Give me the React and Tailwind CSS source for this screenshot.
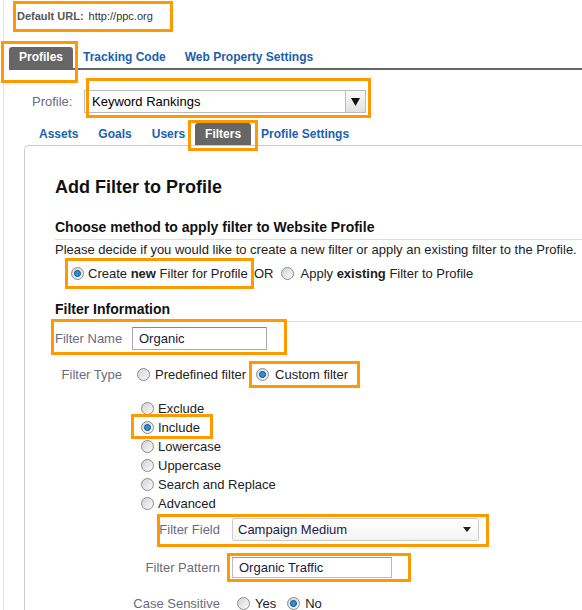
import React from 'react';

function Radio({ checked }) {
  return (
    <span className="flex h-[13px] w-[13px] shrink-0 items-center justify-center rounded-full border border-[#8c8c8c] bg-gradient-to-br from-[#d2d2d2] to-[#fbfbfb]">
      {checked && <span className="h-[7px] w-[7px] rounded-full border border-[#0e4f85] bg-[#2f8fd4]" />}
    </span>
  );
}

function Option({ checked, children }) {
  return (
    <div className="flex h-[19px] items-center gap-[4px]">
      <Radio checked={checked} />
      <span className="whitespace-nowrap">{children}</span>
    </div>
  );
}

export default function App() {
  return (
    <div className="h-[610px] overflow-hidden bg-white font-['Liberation_Sans',Arial,sans-serif] text-[#222]">
      <div className="ml-[3px] min-h-[610px] border-l border-[#e4e4e4]">
        {/* Default URL */}
        <div className="ml-[9px] pt-[1px]">
          <div className="flex h-[31px] w-[160px] items-center gap-[5px] border-[3px] border-[#f90] pl-[1px]">
            <span className="whitespace-nowrap text-[11px] font-bold text-[#555]">Default URL:</span>
            <span className="whitespace-nowrap text-[11px] text-[#333]">http://ppc.org</span>
          </div>
        </div>

        {/* Top tabs */}
        <div className="ml-[5px] mt-[15px] flex border-b-2 border-[#666] text-[12px] font-bold">
          <div className="relative h-[21px] rounded-t-[3px] bg-[#666] px-[10px] leading-[21px] text-white">
            Profiles
            <span className="pointer-events-none absolute -left-[8px] -top-[6px] h-[42px] w-[77px] border-[3px] border-[#f90]" />
          </div>
          <div className="h-[21px] whitespace-nowrap px-[10px] leading-[21px] text-[#1b5fad]">Tracking Code</div>
          <div className="h-[21px] whitespace-nowrap px-[9px] leading-[21px] text-[#1b5fad]">Web Property Settings</div>
        </div>

        {/* Profile select */}
        <div className="mt-[20px] flex items-center pl-[28px] text-[13px]">
          <span className="w-[52px] text-[#6b6b80]">Profile:</span>
          <div className="relative flex h-[23px] w-[282px] border border-[#bbb]">
            <span className="flex-1 pl-[7px] leading-[21px] text-black">Keyword Rankings</span>
            <span className="flex w-[20px] items-center justify-center border-l border-[#bbb] bg-gradient-to-b from-[#fafafa] to-[#e2e2e2]">
              <svg width="9" height="8" viewBox="0 0 9 8">
                <path d="M0 0h9L4.5 8z" fill="#111" />
              </svg>
            </span>
            <span className="pointer-events-none absolute left-[1px] -top-[13px] h-[40px] w-[285px] border-[3px] border-[#f90]" />
          </div>
        </div>

        {/* Profile sub tabs */}
        <div className="mt-[10px] flex pl-[25px] text-[12px] font-bold">
          <div className="h-[22px] px-[10px] leading-[22px] text-[#1b5fad]">Assets</div>
          <div className="h-[22px] px-[10px] leading-[22px] text-[#1b5fad]">Goals</div>
          <div className="h-[22px] px-[10px] leading-[22px] text-[#1b5fad]">Users</div>
          <div className="relative h-[22px] rounded-t-[3px] bg-[#666] px-[10px] leading-[22px] text-white">
            Filters
            <span className="pointer-events-none absolute -left-[7px] -top-[3px] h-[31px] w-[70px] border-[3px] border-[#f90]" />
          </div>
          <div className="h-[22px] whitespace-nowrap px-[10px] leading-[22px] text-[#1b5fad]">Profile Settings</div>
        </div>

        {/* Panel */}
        <div className="ml-[20px] min-h-[470px] rounded-tl-[5px] border-l border-t border-[#ccc] pl-[30px] pt-[30px] text-[13px]">
          <h1 className="text-[18px] font-bold leading-[22px] text-[#111]">Add Filter to Profile</h1>

          <h2 className="mt-[20px] whitespace-nowrap border-b border-[#ddd] pb-[3px] text-[14px] font-bold leading-[18px] text-[#111]">
            Choose method to apply filter to Website Profile
          </h2>
          <p className="mt-[2px] whitespace-nowrap leading-[15px]">
            Please decide if you would like to create a new filter or apply an existing filter to the Profile.
          </p>

          <div className="mt-[1px] flex items-center">
            <div className="ml-[10px] flex h-[31px] w-[189px] items-center gap-[4px] border-[3px] border-[#f90] pl-[3px]">
              <Radio checked />
              <span className="whitespace-nowrap">
                Create <b>new</b> Filter for Profile
              </span>
            </div>
            <span>OR</span>
            <span className="ml-[7px]">
              <Radio />
            </span>
            <span className="ml-[7px] whitespace-nowrap">
              Apply <b>existing</b> Filter to Profile
            </span>
          </div>

          <h2 className="mt-[11px] border-b border-[#ddd] pb-[3px] text-[14px] font-bold leading-[18px] text-[#111]">
            Filter Information
          </h2>

          {/* Filter name */}
          <div className="relative mt-[5px] flex w-fit items-center">
            <span className="w-[67px] whitespace-nowrap text-right text-[#6b6b80]">Filter Name</span>
            <span className="ml-[10px] h-[23px] w-[135px] border border-[#aaa] border-t-[#888] pl-[6px] leading-[21px] text-[#1a1a40]">
              Organic
            </span>
            <span className="pointer-events-none absolute -left-[4px] -top-[8px] h-[36px] w-[236px] border-[3px] border-[#f90]" />
          </div>

          {/* Filter type */}
          <div className="mt-[11px] flex h-[27px] items-center">
            <span className="w-[67px] whitespace-nowrap text-right text-[#6b6b80]">Filter Type</span>
            <span className="ml-[15px]">
              <Radio />
            </span>
            <span className="ml-[5px] whitespace-nowrap">Predefined filter</span>
            <div className="ml-[3px] flex h-[27px] w-[111px] items-center gap-[6px] border-[3px] border-[#f90] pl-[4px]">
              <Radio checked />
              <span className="whitespace-nowrap">Custom filter</span>
            </div>
          </div>

          {/* Custom filter options */}
          <div className="ml-[86px] mt-[11px]">
            <Option>Exclude</Option>
            <div className="relative w-fit">
              <Option checked>Include</Option>
              <span className="pointer-events-none absolute -left-[10px] -top-[4px] h-[25px] w-[82px] border-[3px] border-[#f90]" />
            </div>
            <Option>Lowercase</Option>
            <Option>Uppercase</Option>
            <Option>Search and Replace</Option>
            <Option>Advanced</Option>
          </div>

          {/* Filter field */}
          <div className="relative mt-[5px] flex items-center">
            <span className="w-[165px] whitespace-nowrap text-right text-[#6b6b80]">Filter Field</span>
            <div className="ml-[12px] flex h-[23px] w-[247px] items-center justify-between rounded-[2px] border border-[#ccc] bg-gradient-to-b from-white to-[#f4f4f4] pl-[5px] pr-[7px]">
              <span className="text-[#1a1a40]">Campaign Medium</span>
              <svg width="8" height="5" viewBox="0 0 8 5">
                <path d="M0 0h8L4 5z" fill="#222" />
              </svg>
            </div>
            <span className="pointer-events-none absolute left-[102px] -top-[4px] h-[33px] w-[332px] border-[3px] border-[#f90]" />
          </div>

          {/* Filter pattern */}
          <div className="relative mt-[16px] flex items-center">
            <span className="w-[165px] whitespace-nowrap text-right text-[#6b6b80]">Filter Pattern</span>
            <span className="ml-[12px] h-[21px] w-[160px] border border-[#bbb] border-t-[#999] pl-[6px] leading-[19px] text-[#1a1a40]">
              Organic Traffic
            </span>
            <span className="pointer-events-none absolute left-[172px] -top-[4px] h-[29px] w-[184px] border-[3px] border-[#f90]" />
          </div>

          {/* Case sensitive */}
          <div className="mt-[16px] flex h-[19px] items-center">
            <span className="w-[165px] whitespace-nowrap text-right text-[#6b6b80]">Case Sensitive</span>
            <span className="ml-[17px]">
              <Radio />
            </span>
            <span className="ml-[5px]">Yes</span>
            <span className="ml-[11px]">
              <Radio checked />
            </span>
            <span className="ml-[5px]">No</span>
          </div>
        </div>
      </div>
    </div>
  );
}
